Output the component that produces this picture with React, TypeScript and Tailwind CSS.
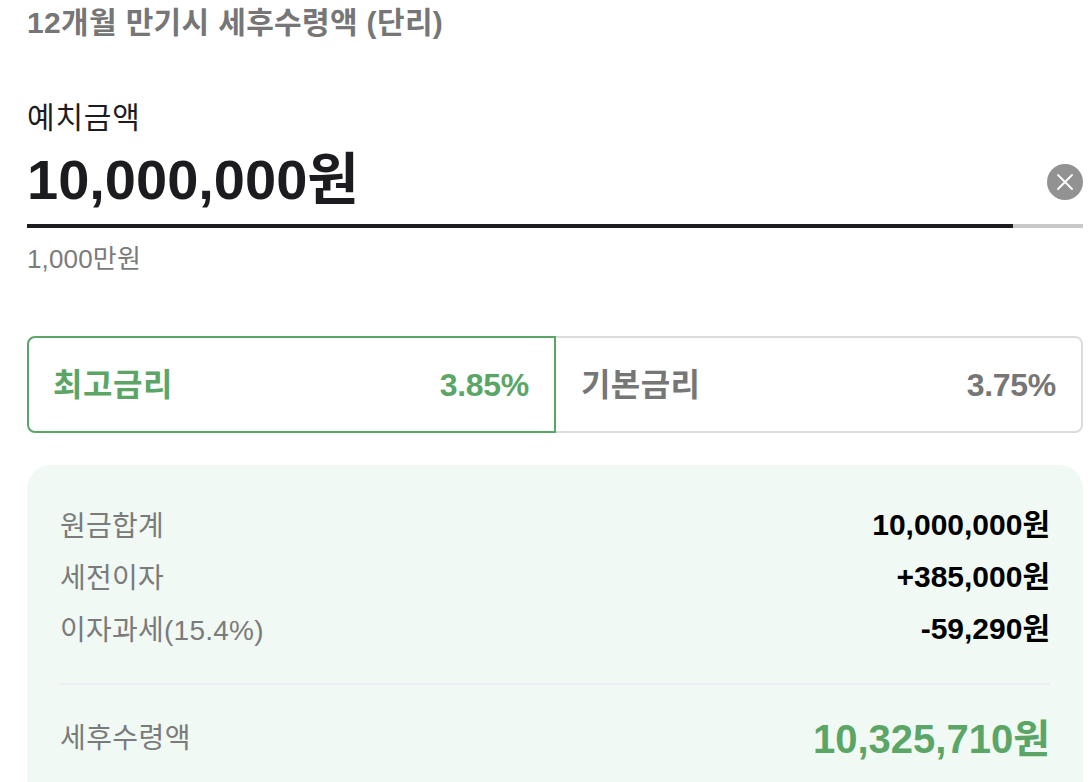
const font = "[font-family:'Liberation_Sans','Noto_Sans_CJK_KR',sans-serif]";

function Row({ label, value }: { label: string; value: string }) {
  return (
    <div className="flex h-[52px] items-center justify-between">
      <span className="pt-[3px] text-[28px] tracking-[0.25px] text-[#7b7b7b]">{label}</span>
      <span className="pb-[2px] text-[30px] font-bold text-black">{value}</span>
    </div>
  );
}

export default function App() {
  return (
    <div className={`h-[782px] w-[1092px] overflow-hidden bg-white pl-[27px] pr-[9px] ${font}`}>
      <h2 className="flex h-[44px] items-center text-[30px] font-bold tracking-[0.35px] text-[#767676]">12개월 만기시 세후수령액 (단리)</h2>
      <div className="mt-[52px] text-[30px] leading-[44px] tracking-[0.8px] text-[#1c1c20]">예치금액</div>
      <div className="flex h-[84px] items-center justify-between pb-1">
        <span className="text-[56px] font-bold text-[#1c1c20]">10,000,000원</span>
        <span className="mt-1 flex h-9 w-9 items-center justify-center rounded-full bg-[#929292]">
          <svg width="18" height="18" viewBox="0 0 18 18" fill="none" stroke="white" strokeWidth="1.8" strokeLinecap="round">
            <path d="M2 2 L16 16 M16 2 L2 16" />
          </svg>
        </span>
      </div>
      <div className="flex h-1">
        <div className="w-[986px] bg-[#1c1c20]" />
        <div className="flex-1 bg-[#c8c8c8]" />
      </div>
      <div className="mt-[13px] text-[26px] leading-[36px] tracking-[0.15px] text-[#7b7b7b]">1,000만원</div>
      <div className="mt-[59px] flex h-[97px]">
        <div className="flex w-[529px] items-center justify-between rounded-l-[8px] border-2 border-[#5ba666] pl-[24px] pr-[25px] text-[#5ba666]">
          <span className="text-[32px] font-bold tracking-[0.6px]">최고금리</span>
          <span className="text-[32px] font-bold tracking-[-0.3px]">3.85%</span>
        </div>
        <div className="flex flex-1 items-center justify-between rounded-r-[8px] border-2 border-l-0 border-[#dcdcdc] pl-[25px] pr-[25px] text-[#767676]">
          <span className="text-[32px] font-bold tracking-[0.4px]">기본금리</span>
          <span className="text-[32px] font-bold tracking-[-0.3px]">3.75%</span>
        </div>
      </div>
      <div className="mt-[32px] rounded-t-[24px] bg-[#f0f9f3] px-[33px] pt-[34px] pb-[40px]">
        <Row label="원금합계" value="10,000,000원" />
        <Row label="세전이자" value="+385,000원" />
        <Row label="이자과세(15.4%)" value="-59,290원" />
        <div className="mt-[28px] border-t-2 border-[#ebeff1]" />
        <div className="mt-[24px] flex h-[60px] items-center justify-between">
          <span className="text-[28px] tracking-[0.4px] text-[#7b7b7b]">세후수령액</span>
          <span className="text-[40px] font-bold text-[#5ba666]">10,325,710원</span>
        </div>
      </div>
    </div>
  );
}
